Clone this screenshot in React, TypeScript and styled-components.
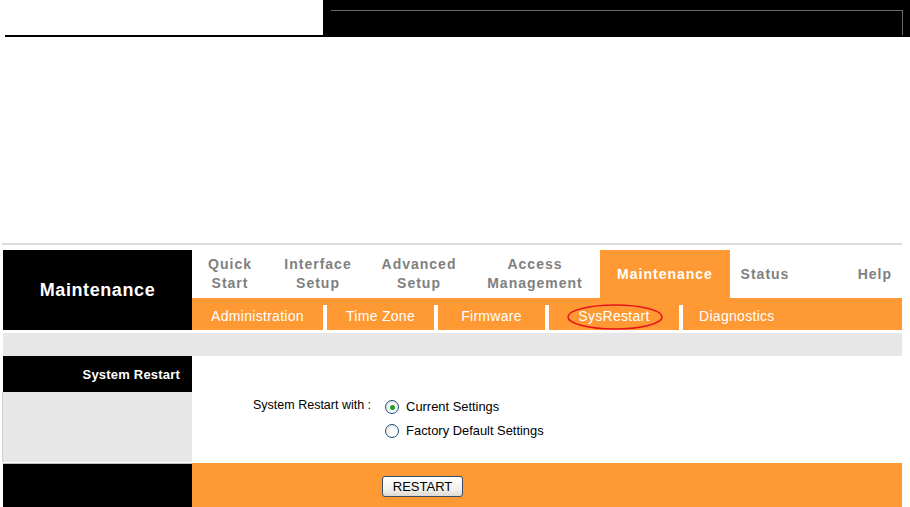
import styled, { createGlobalStyle } from "styled-components";

const GlobalStyle = createGlobalStyle`
  *, *::before, *::after {
    box-sizing: border-box;
  }
  html, body {
    margin: 0;
    padding: 0;
    background: #ffffff;
    font-family: "Liberation Sans", Arial, sans-serif;
  }
`;

const ORANGE = "#ff9933";
const PANEL_GRAY = "#e7e7e7";

const Page = styled.div`
  width: 910px;
  height: 507px;
  overflow: hidden;
  background: #ffffff;
`;

const Header = styled.div`
  display: flex;
  height: 37px;
`;

const HeaderBlank = styled.div`
  width: 318px;
  margin-left: 5px;
  border-bottom: 2px solid #000000;
`;

const HeaderBar = styled.div`
  flex: 1;
  background: #000000;
  padding: 10px 7px 2px 8px;
`;

const HeaderFrame = styled.div`
  height: 100%;
  border-top: 1px solid #6a6a6a;
  border-right: 1px solid #6a6a6a;
`;

const Panel = styled.div`
  margin: 206px 0 0 2px;
  width: 900px;
`;

const TopRule = styled.div`
  height: 2px;
  background: #dcdcdc;
  margin-bottom: 5px;
`;

const Grid = styled.div`
  display: grid;
  grid-template-columns: 189px minmax(0, 1fr);
  margin-left: 1px;
`;

const Title = styled.div`
  grid-row: span 2;
  background: #000000;
  color: #ffffff;
  display: flex;
  align-items: center;
  justify-content: center;
  font-size: 18px;
  font-weight: bold;
  letter-spacing: 0.6px;
`;

const NavRow = styled.div`
  display: flex;
  height: 48px;
`;

const NavTab = styled.div<{ $w: number; $active?: boolean; $align?: string }>`
  width: ${(p) => p.$w}px;
  flex: ${(p) => (p.$align === "right" ? 1 : "none")};
  display: flex;
  align-items: center;
  justify-content: ${(p) => (p.$align === "right" ? "flex-end" : "center")};
  padding-right: ${(p) => (p.$align === "right" ? "10px" : "0")};
  text-align: center;
  background: ${(p) => (p.$active ? ORANGE : "#ffffff")};
  color: ${(p) => (p.$active ? "#ffffff" : "#7f7f7f")};
  font-size: 14px;
  font-weight: bold;
  letter-spacing: 1px;
  line-height: 19px;
`;

const SubNav = styled.div`
  display: flex;
  background: ${ORANGE};
  padding-top: 7px;
  height: 32px;
`;

const SubItem = styled.div<{ $w?: number; $first?: boolean }>`
  position: relative;
  width: ${(p) => (p.$w ? `${p.$w}px` : "auto")};
  flex: ${(p) => (p.$w ? "none" : 1)};
  border-left: ${(p) => (p.$first ? "none" : "4px solid #ffffff")};
  padding-left: ${(p) => (p.$w ? "0" : "16px")};
  text-align: ${(p) => (p.$w ? "center" : "left")};
  color: #ffffff;
  font-size: 14px;
  letter-spacing: 0.3px;
  line-height: 22px;
`;

const Circle = styled.svg`
  position: absolute;
  left: 17px;
  top: -2px;
  pointer-events: none;
`;

const GrayBand = styled.div`
  grid-column: span 2;
  height: 23px;
  margin-top: 3px;
  background: ${PANEL_GRAY};
`;

const SectionLabel = styled.div`
  background: #000000;
  color: #ffffff;
  height: 36px;
  display: flex;
  align-items: center;
  justify-content: flex-end;
  padding-right: 12px;
  font-size: 13px;
  font-weight: bold;
  letter-spacing: 0.2px;
`;

const Content = styled.div`
  grid-row: span 2;
  background: #ffffff;
  padding: 43px 0 0 61px;
  height: 106px;
  font-size: 12.5px;
  color: #000000;
`;

const SideFill = styled.div`
  background: ${PANEL_GRAY};
  height: 70px;
  border-left: 1px solid #cfcfcf;
  margin-left: -1px;
`;

const FormRow = styled.div`
  display: flex;
  gap: 14px;
`;

const FormLabel = styled.div`
  line-height: 16px;
  margin-top: -2px;
`;

const Options = styled.div`
  display: flex;
  flex-direction: column;
  gap: 8px;
  font-size: 12.9px;
`;

const Option = styled.label`
  display: flex;
  align-items: center;
  gap: 7px;
  line-height: 16px;
`;

const Radio = styled.span<{ $checked?: boolean }>`
  width: 14px;
  height: 14px;
  border: 1px solid #1c5180;
  border-radius: 50%;
  background: radial-gradient(circle at 60% 60%, #ffffff 30%, #d8d8d0 100%);
  display: flex;
  align-items: center;
  justify-content: center;
  &::after {
    content: "";
    width: 5px;
    height: 5px;
    border-radius: 50%;
    background: ${(p) => (p.$checked ? "#21a121" : "transparent")};
  }
`;

const FooterSide = styled.div`
  background: #000000;
  height: 50px;
  margin-top: 1px;
  border-top: 1px solid #bdbdbd;
`;

const FooterMain = styled.div`
  background: ${ORANGE};
  height: 50px;
  margin-top: 1px;
  padding: 13px 0 0 190px;
`;

const Button = styled.button`
  width: 81px;
  height: 21px;
  border: 1px solid #3a4e6a;
  border-radius: 3px;
  background: linear-gradient(#ffffff, #f0efe8 70%, #dcdad0);
  font-family: "Liberation Sans", Arial, sans-serif;
  font-size: 13px;
  color: #000000;
  padding: 0;
`;

const topTabs = [
  { label: "Quick\nStart", w: 76 },
  { label: "Interface\nSetup", w: 100 },
  { label: "Advanced\nSetup", w: 102 },
  { label: "Access\nManagement", w: 130 },
  { label: "Maintenance", w: 130, active: true },
  { label: "Status", w: 70 },
];

const subTabs = [
  { label: "Administration", w: 131 },
  { label: "Time Zone", w: 111 },
  { label: "Firmware", w: 111 },
  { label: "SysRestart", w: 134, circled: true },
];

export default function App() {
  return (
    <Page>
      <GlobalStyle />
      <Header>
        <HeaderBlank />
        <HeaderBar>
          <HeaderFrame />
        </HeaderBar>
      </Header>
      <Panel>
        <TopRule />
        <Grid>
          <Title>Maintenance</Title>
          <NavRow>
            {topTabs.map((t) => (
              <NavTab key={t.label} $w={t.w} $active={t.active}>
                <span>
                  {t.label.split("\n").map((line, i) => (
                    <div key={i}>{line}</div>
                  ))}
                </span>
              </NavTab>
            ))}
            <NavTab $w={100} $align="right">
              Help
            </NavTab>
          </NavRow>
          <SubNav>
            {subTabs.map((s, i) => (
              <SubItem key={s.label} $w={s.w} $first={i === 0}>
                {s.label}
                {s.circled && (
                  <Circle width="98" height="28" viewBox="0 0 98 28">
                    <ellipse
                      cx="49"
                      cy="14"
                      rx="47"
                      ry="12"
                      fill="none"
                      stroke="#e8141c"
                      strokeWidth="1.6"
                    />
                  </Circle>
                )}
              </SubItem>
            ))}
            <SubItem>Diagnostics</SubItem>
          </SubNav>
          <GrayBand />
          <SectionLabel>System Restart</SectionLabel>
          <Content>
            <FormRow>
              <FormLabel>System Restart with :</FormLabel>
              <Options>
                <Option>
                  <Radio $checked />
                  Current Settings
                </Option>
                <Option>
                  <Radio />
                  Factory Default Settings
                </Option>
              </Options>
            </FormRow>
          </Content>
          <SideFill />
          <FooterSide />
          <FooterMain>
            <Button>RESTART</Button>
          </FooterMain>
        </Grid>
      </Panel>
    </Page>
  );
}
